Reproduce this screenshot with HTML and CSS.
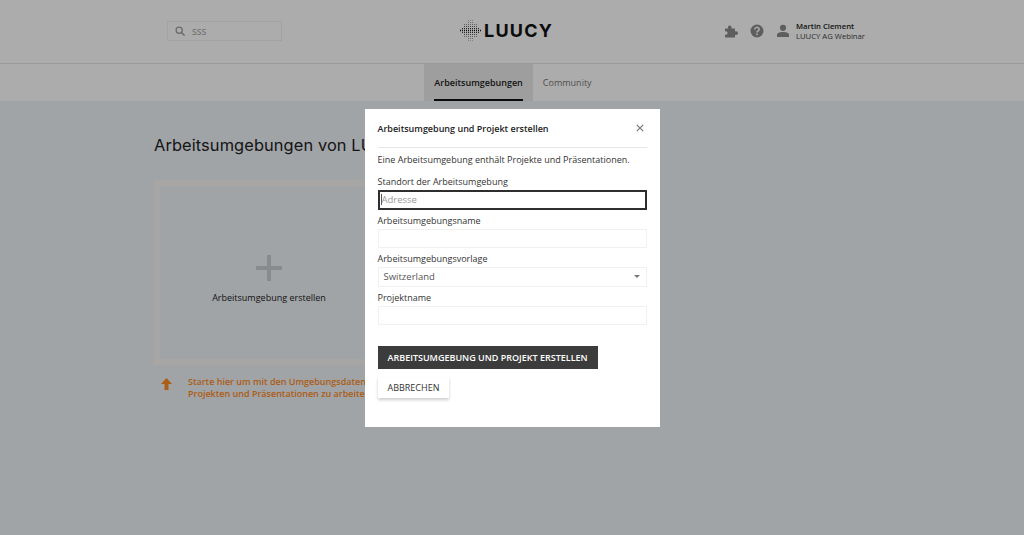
FILE: index.html
```html
<!DOCTYPE html>
<html lang="de">
  <head>
    <meta charset="UTF-8" />
    <title>LUUCY</title>
    <link rel="stylesheet" href="styles.css">
  </head>

  <body>
    <header class="topbar">
      <div class="search">
        <svg class="searchIcon" viewBox="0 0 12 12" width="10" height="10">
          <circle cx="5" cy="5" r="3.700" fill="none" stroke="#9d9d9d" stroke-width="1.500" />
          <line x1="7.600" y1="7.600" x2="11.500" y2="11.500" stroke="#9d9d9d" stroke-width="1.800" />
        </svg>
        <span>sss</span>
      </div>

      <div class="logo">
        <svg class="logoDots" viewBox="0 0 21 21" width="21" height="21" stroke="#111" stroke-dasharray="1 1">
          <line x1="8" y1="0.500" x2="13" y2="0.500" stroke-opacity=".25" />
          <line x1="8" y1="2.500" x2="13" y2="2.500" stroke-opacity=".4" />
          <line x1="4" y1="4.500" x2="17" y2="4.500" stroke-opacity=".45" />
          <line x1="4" y1="6.500" x2="17" y2="6.500" stroke-opacity=".65" />
          <line x1="2" y1="8.500" x2="19" y2="8.500" stroke-opacity=".85" />
          <line x1="0" y1="10.500" x2="21" y2="10.500" stroke-width="1.400" />
          <line x1="2" y1="12.500" x2="19" y2="12.500" stroke-opacity=".85" />
          <line x1="4" y1="14.500" x2="17" y2="14.500" stroke-opacity=".65" />
          <line x1="4" y1="16.500" x2="17" y2="16.500" stroke-opacity=".45" />
          <line x1="8" y1="18.500" x2="13" y2="18.500" stroke-opacity=".4" />
          <line x1="8" y1="20.500" x2="13" y2="20.500" stroke-opacity=".25" />
        </svg>
        <span class="logoText">LUUCY</span>
      </div>

      <div class="userArea">
        <svg viewBox="0 0 14 14" width="14" height="14">
          <path fill="#8c8c8c" d="M1 4.500h3.200c-.7-1.600.1-3 1.600-3s2.300 1.400 1.600 3H11v3c1.500-.8 3 0 3 1.600s-1.500 2.400-3 1.600V13.500H1v-3c1.400.7 2.500-.2 2.500-1.500S2.400 6.800 1 7.500z" />
        </svg>
        <svg viewBox="0 0 14 14" width="14" height="14">
          <circle cx="7" cy="7" r="6.500" fill="#8c8c8c" />
          <path fill="none" stroke="#fff" stroke-width="1.500" d="M4.800 5.500c0-2.800 4.400-2.800 4.400-.2 0 1.600-2.200 1.600-2.200 3.200" />
          <rect x="6.200" y="9.500" width="1.600" height="1.600" fill="#fff" />
        </svg>
        <svg class="userIcon" viewBox="0 0 14 14" width="14" height="14">
          <circle cx="7" cy="3.800" r="3.100" fill="#8c8c8c" />
          <path fill="#8c8c8c" d="M1 13v-2.200C1 8.800 4 8 7 8s6 .8 6 2.800V13z" />
        </svg>
        <div class="userText">
          <div class="userName">Martin Clement</div>
          <div class="userOrg">LUUCY AG Webinar</div>
        </div>
      </div>
    </header>

    <nav class="tabs">
      <a class="tab valgt"><span>Arbeitsumgebungen</span></a>
      <a class="tab"><span>Community</span></a>
    </nav>

    <main>
      <h1>Arbeitsumgebungen von LUUCY AG Webinar</h1>
      <div class="createCard">
        <div class="plus"></div>
        <p>Arbeitsumgebung erstellen</p>
      </div>
      <div class="hint">
        <svg viewBox="0 0 11 12" width="11" height="12">
          <path fill="#ff8a1e" d="M5.500 0 11 6H7.500v6h-4V6H0z" />
        </svg>
        <p>Starte hier um mit den Umgebungsdaten,<br>Projekten und Präsentationen zu arbeiten</p>
      </div>
    </main>

    <div class="overlay">
      <section class="dialog">
        <div class="dialogHead">
          <h2>Arbeitsumgebung und Projekt erstellen</h2>
          <svg viewBox="0 0 8 8" width="8" height="8">
            <path stroke="#777" stroke-width="1.200" d="M.8.8l6.400 6.400M7.200.8.800 7.200" />
          </svg>
        </div>
        <p class="intro">Eine Arbeitsumgebung enthält Projekte und Präsentationen.</p>

        <label>Standort der Arbeitsumgebung</label>
        <div class="field fokus"><span class="cursor"></span>Adresse</div>

        <label>Arbeitsumgebungsname</label>
        <div class="field"></div>

        <label>Arbeitsumgebungsvorlage</label>
        <div class="field valg">Switzerland<span class="caret"></span></div>

        <label>Projektname</label>
        <div class="field"></div>

        <button class="knap primaer">Arbeitsumgebung und Projekt erstellen</button>
        <button class="knap sekundaer">Abbrechen</button>
      </section>
    </div>
  </body>
</html>
```

FILE: styles.css
```css
* {
  box-sizing: border-box;
}

html,
body {
  height: 100%;
}

body {
  margin: 0;
  background-color: #eef3f8;
  font-family: "Open Sans", sans-serif;
  color: #222;
  overflow: hidden;
}

.topbar {
  height: 64px;
  background-color: #fff;
  border-bottom: 1px solid #e4e4e4;
  display: grid;
  grid-template-columns: 1fr auto 1fr;
  align-items: center;
  padding: 0 159px 2px 167px;
}

.search {
  width: 115px;
  height: 20px;
  border: 1px solid #f0f0f0;
  display: flex;
  align-items: center;
  gap: 7px;
  padding-left: 7px;
  font-size: 10px;
  color: #9d9d9d;
}

.logo {
  display: flex;
  align-items: center;
  gap: 3px;
  margin-right: 19px;
}

.logoText {
  font-family: Inter, sans-serif;
  font-weight: 700;
  font-size: 18px;
  letter-spacing: 1.2px;
  color: #111;
}

.userArea {
  display: flex;
  align-items: center;
  justify-content: flex-end;
  gap: 12px;
}

.userIcon {
  margin-right: -6px;
}

.userText {
  font-size: 7.700px;
  line-height: 10px;
}

.userName {
  font-weight: 600;
}

.userOrg {
  color: #444;
}

.tabs {
  height: 37px;
  background-color: #fff;
  display: flex;
  justify-content: center;
  padding-left: 2px;
}

.tab {
  padding: 0 10px;
  font-size: 9px;
  color: #777;
}

.tab span {
  height: 100%;
  display: flex;
  align-items: center;
}

.valgt {
  background-color: #eaeaea;
  color: #222;
  font-weight: 600;
}

.valgt span {
  border-top: 2px solid transparent;
  border-bottom: 2px solid #111;
}

main {
  padding: 36px 0 0 154px;
}

h1 {
  margin: 0 0 27px;
  font-family: Inter, sans-serif;
  font-weight: 400;
  font-size: 16.400px;
  line-height: 16px;
  letter-spacing: 0.1px;
  white-space: nowrap;
}

.createCard {
  width: 230px;
  height: 185px;
  border: 6px solid #f9f6f3;
  display: flex;
  flex-direction: column;
  align-items: center;
  padding-top: 69px;
}

.createCard p {
  margin: 11px 0 0;
  font-size: 9px;
  line-height: 12px;
}

.plus {
  width: 26px;
  height: 26px;
  background:
    linear-gradient(#caced2, #caced2) center / 26px 4px no-repeat,
    linear-gradient(#caced2, #caced2) center / 4px 26px no-repeat;
}

.hint {
  display: flex;
  gap: 16px;
  margin: 11px 0 0 7px;
  align-items: flex-start;
  white-space: nowrap;
}

.hint svg {
  margin-top: 2px;
}

.hint p {
  margin: 0;
  font-size: 9px;
  line-height: 12px;
  font-weight: 600;
  color: #ff8a1e;
}

.overlay {
  position: fixed;
  inset: 0;
  background-color: rgba(0, 0, 0, 0.325);
  display: flex;
  justify-content: center;
  padding-top: 109px;
}

.dialog {
  width: 295px;
  height: 318px;
  background-color: #fff;
  padding: 0 13px;
  display: flex;
  flex-direction: column;
  align-items: flex-start;
}

.dialogHead {
  width: 100%;
  height: 39px;
  border-bottom: 1px solid #e6e6e6;
  display: flex;
  justify-content: space-between;
  align-items: center;
  padding: 0 3px 0 0;
}

h2 {
  margin: 0;
  font-size: 9px;
  font-weight: 600;
}

.intro {
  margin: 5px 0 0;
  font-size: 9px;
  line-height: 13px;
  color: #333;
}

label {
  display: block;
  margin-top: 4px;
  font-size: 9px;
  line-height: 13px;
  color: #333;
}

.intro + label {
  margin-top: 9px;
}

label + .field {
  margin-top: 2px;
}

.field {
  width: 100%;
  height: 19.500px;
  border: 1px solid #f1f1f1;
  font-size: 9.500px;
  display: flex;
  align-items: center;
}

.fokus {
  border: 2px solid #2e2e2e;
  color: #999;
  padding-left: 1px;
}

.cursor {
  width: 1px;
  height: 11px;
  background-color: #555;
}

.valg {
  padding: 0 6px 0 5px;
  color: #555;
  justify-content: space-between;
}

.caret {
  border: 3.500px solid transparent;
  border-top: 3.500px solid #777;
  border-bottom: 0;
}

.knap {
  font-family: inherit;
  font-size: 9px;
  line-height: 13px;
  text-transform: uppercase;
  border: 0;
  padding: 0 10px;
}

.primaer {
  margin-top: 21px;
  height: 23px;
  background-color: #3c3c3c;
  color: #fff;
  font-weight: 600;
}

.sekundaer {
  margin-top: 8px;
  height: 21px;
  background-color: #fff;
  color: #333;
  font-weight: 500;
  box-shadow: 0 2px 3px rgba(0, 0, 0, 0.2);
}
```
